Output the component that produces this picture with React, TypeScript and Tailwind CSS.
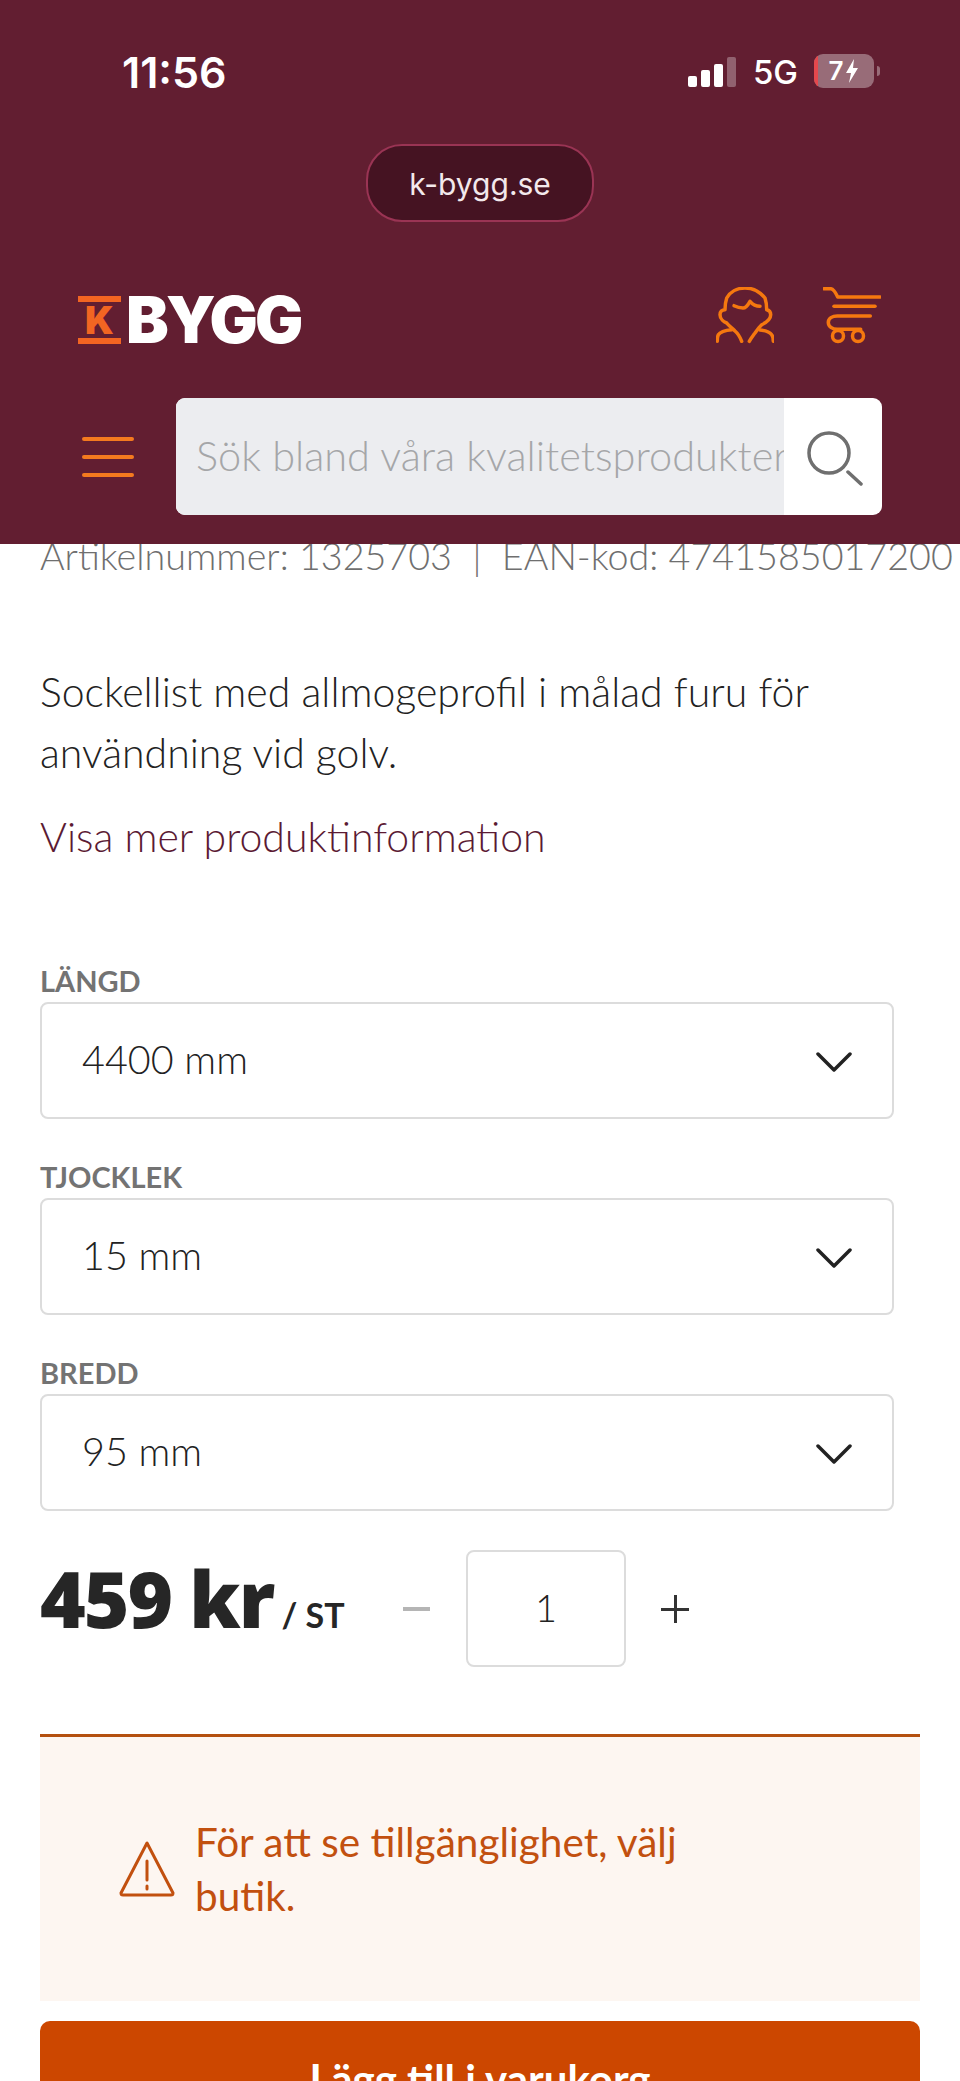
const selects = [
  { label: 'LÄNGD', value: '4400 mm' },
  { label: 'TJOCKLEK', value: '15 mm' },
  { label: 'BREDD', value: '95 mm' },
];

const StatusBar = () => (
  <div className="flex h-[144px] items-start justify-between pt-[50px] pl-[122px] pr-[80px] text-white">
    <span className="font-['Inter',sans-serif] text-[43px] leading-[44px] font-semibold">
      11:56
    </span>
    <div className="flex items-start">
      <div className="mt-[7px] flex h-[30px] items-end gap-[4px]">
        <div className="h-[11px] w-[9px] rounded-[2px] bg-white" />
        <div className="h-[17px] w-[9px] rounded-[2px] bg-white" />
        <div className="h-[23px] w-[9px] rounded-[2px] bg-white" />
        <div className="h-[30px] w-[9px] rounded-[2px] bg-white/30" />
      </div>
      <span className="mt-[4px] ml-[17px] font-['Inter',sans-serif] text-[33px] leading-[36px] font-medium">
        5G
      </span>
      <div className="ml-[16px] flex items-center gap-[3px] pt-[4px]">
        <div className="relative flex h-[34px] w-[60px] items-center justify-center gap-[2px] overflow-hidden rounded-[9px] bg-white/35">
          <div className="absolute inset-y-0 left-0 w-[4px] bg-[#e5484d]" />
          <span className="font-['Inter',sans-serif] text-[26px] leading-none font-semibold">
            7
          </span>
          <svg width="14" height="24" viewBox="0 0 14 24" fill="white">
            <path d="M9 0 1 14h5l-2 10 9-15H8z" />
          </svg>
        </div>
        <div className="h-[10px] w-[3px] rounded-r-full bg-white/35" />
      </div>
    </div>
  </div>
);

const Logo = () => (
  <div className="flex items-center gap-[5px]">
    <div className="flex h-[48px] w-[43px] flex-col justify-between">
      <div className="h-[6px] bg-[#f26522]" />
      <span className="text-center font-['Inter',sans-serif] text-[38px] leading-[30px] font-black text-[#f26522]">
        K
      </span>
      <div className="h-[6px] bg-[#f26522]" />
    </div>
    <span className="font-['Inter',sans-serif] text-[64px] leading-[48px] font-black tracking-[-2.8px] text-white">
      BYGG
    </span>
  </div>
);

const UserIcon = () => (
  <svg width="58" height="57" viewBox="0 0 58 57" fill="none" stroke="#f5780f" strokeWidth="3.500" strokeLinecap="round" strokeLinejoin="round">
    <path d="M25.700 54.300C24 50 22 46.500 19 44c-3-3-6-5-8.300-8-2.700-1-6.700-4-6.700-8.300 0-3 2-5 5-5 0-4 .5-8 1.700-11.700C14 5 21 1 29 1s15 4 20 10c1.200 3.700 1.700 8 1.700 11.700 2.500.5 4 2.500 4 5 0 4-4 7.500-9 10-2.500 2.300-4.700 5.300-6.700 8.300-2 2.800-4 5.300-5.700 8.300" />
    <path d="M18 18.700c3 1.500 6 2.300 9 2.300 3 0 5-3 7-6.700 2.500 3 6 5 10 5" />
    <path d="M1.300 54.300c0-3 .2-5 1-6.600 2-3 8-4.500 13.400-5" />
    <path d="M57.300 54.300c0-3-.4-5-1.600-6.600-2-3-7-4.200-11.700-4.700" />
  </svg>
);

const CartIcon = () => (
  <svg width="58" height="57" viewBox="0 0 58 57" fill="none" stroke="#f5780f" strokeWidth="3.500" strokeLinecap="round" strokeLinejoin="round">
    <path d="M1 1.700h6.700c3 0 5 4 7 8.300H57" />
    <path d="M11 19.300h41" />
    <path d="M47.300 29H14.300c-5 0-9 2.500-9 6.500s4 6.800 9 6.800h23.400" />
    <circle cx="15" cy="49" r="5.500" />
    <circle cx="35" cy="49" r="5.500" />
  </svg>
);

const Header = () => (
  <header className="relative z-10 h-[544px] bg-[#621e31]">
    <StatusBar />
    <div className="flex justify-center">
      <div className="flex h-[78px] w-[228px] items-center justify-center rounded-[36px] border-2 border-[#9a3454] bg-[#451322] pt-[2px] font-['Inter',sans-serif] text-[30px] text-[#f3e9ec]">
        k-bygg.se
      </div>
    </div>
    <div className="mt-[65px] flex items-end justify-between pl-[78px] pr-[79px]">
      <Logo />
      <div className="flex items-center gap-[49px]">
        <UserIcon />
        <CartIcon />
      </div>
    </div>
    <div className="mt-[54px] flex items-center pl-[82px] pr-[78px]">
      <div className="flex w-[52px] flex-col gap-[14px]">
        <div className="h-[4px] rounded bg-[#f47a1f]" />
        <div className="h-[4px] rounded bg-[#f47a1f]" />
        <div className="h-[4px] rounded bg-[#f47a1f]" />
      </div>
      <div className="ml-[42px] flex h-[117px] flex-1 overflow-hidden rounded-[9px] bg-white">
        <div className="flex w-[608px] shrink-0 items-center overflow-hidden bg-[#ecedf0] pb-[3px] pl-[20px] font-['Lato',sans-serif] text-[41.500px] font-light whitespace-nowrap text-[#a5a6a8]">
          Sök bland våra kvalitetsprodukter
        </div>
        <div className="flex flex-1 items-start justify-start pl-[23px] pt-[33px]">
          <svg width="56" height="56" viewBox="0 0 56 56" fill="none" stroke="#6f6f6f" strokeWidth="3.500" strokeLinecap="round">
            <circle cx="22" cy="22" r="20" />
            <path d="M41 41l13 12" />
          </svg>
        </div>
      </div>
    </div>
  </header>
);

const SelectField = ({ label, value }: { label: string; value: string }) => (
  <div>
    <div className="h-[37px] font-['Lato',sans-serif] text-[29px] leading-[32px] font-bold text-[#737373]">
      {label}
    </div>
    <div className="flex h-[117px] w-[854px] items-center justify-between rounded-[8px] border-2 border-[#dcdcdc] pl-[40px] pr-[40px]">
      <span className="pb-[4px] font-['Lato',sans-serif] text-[39.500px] font-light text-[#222]">{value}</span>
      <svg className="mt-[2px]" width="36" height="20" viewBox="0 0 36 20" fill="none" stroke="#222" strokeWidth="3.500" strokeLinecap="round" strokeLinejoin="round">
        <path d="M2 2l16 16L34 2" />
      </svg>
    </div>
  </div>
);

const WarningIcon = () => (
  <svg width="56" height="56" viewBox="0 0 56 56" fill="none" stroke="#c2500f" strokeWidth="3" strokeLinecap="round" strokeLinejoin="round">
    <path d="M28 2 2 52a2 2 0 0 0 2 2h48a2 2 0 0 0 2-2z" />
    <path d="M28 20v19M28 45v3" />
  </svg>
);

export default function App() {
  return (
    <div className="h-[2081px] w-[960px] overflow-hidden bg-white font-['Lato',sans-serif]">
      <Header />
      <main className="px-[40px]">
        <p className="-mt-[12px] text-[37.700px] leading-[48px] font-light whitespace-nowrap text-[#6f6f6f]">
          Artikelnummer: 1325703 &nbsp;|&nbsp; EAN-kod: 4741585017200
        </p>
        <p className="mt-[81px] w-[860px] text-[41px] leading-[61px] font-light text-[#222]">
          Sockellist med allmogeprofil i målad furu för användning vid golv.
        </p>
        <p className="mt-[30px] text-[41px] leading-[48px] font-light text-[#5b1a33]">
          Visa mer produktinformation
        </p>
        <div className="mt-[104px] flex flex-col gap-[42px]">
          {selects.map((item) => (
            <SelectField key={item.label} label={item.label} value={item.value} />
          ))}
        </div>
        <div className="mt-[39px] flex h-[117px] items-center">
          <span className="mb-[19px] w-[363px] whitespace-nowrap">
            <span className="font-['Open_Sans',sans-serif] text-[78px] leading-none font-extrabold tracking-[-2px] text-[#262626]">
              459 kr
            </span>
            <span className="ml-[8px] text-[34px] font-bold text-[#262626]">/ ST</span>
          </span>
          <span className="h-[4px] w-[27px] bg-[#b5b5b5]" />
          <div className="ml-[36px] flex h-[117px] w-[160px] items-center justify-center rounded-[8px] border-2 border-[#dcdcdc] pb-[3px] text-[38px] font-light text-[#222]">
            1
          </div>
          <div className="relative ml-[35px] h-[28px] w-[28px]">
            <div className="absolute inset-x-0 top-[13px] h-[3px] bg-[#333]" />
            <div className="absolute inset-y-0 left-[13px] w-[3px] bg-[#333]" />
          </div>
        </div>
        <div className="mt-[67px] flex h-[267px] items-center gap-[20px] border-t-[3px] border-[#b4500f] bg-[#fdf6f1] pl-[79px]">
          <WarningIcon />
          <p className="w-[520px] text-[40.500px] leading-[54px] text-[#c2500f]">
            För att se tillgänglighet, välj butik.
          </p>
        </div>
        <div className="mt-[20px] flex h-[120px] items-start justify-center rounded-[10px] bg-[#cc4700] pt-[27px] text-[42px] font-bold text-white">
          Lägg till i varukorg
        </div>
      </main>
    </div>
  );
}
